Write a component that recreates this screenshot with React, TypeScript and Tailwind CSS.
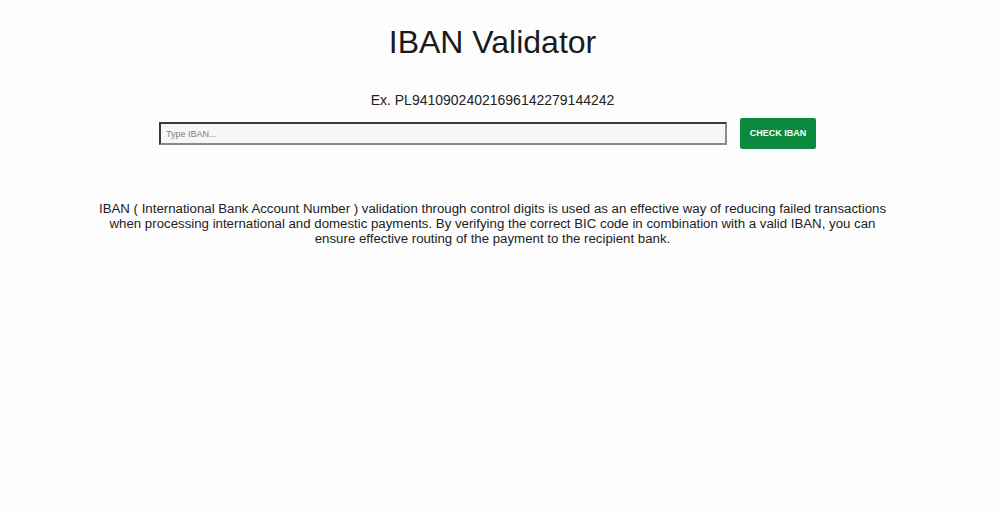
export default function App() {
  return (
    <div className="min-h-screen bg-[#fdfdfd] pr-[15px] text-[#222] font-['Liberation_Sans',Arial,sans-serif]">
      <div className="mx-auto flex w-[820px] flex-col items-center pt-[22px]">
        {/* Title */}
        <h1 className="text-[32px] leading-[40px] text-[#1a1a1a]">IBAN Validator</h1>

        {/* Example */}
        <p className="mt-[30px] text-[14px] leading-[16px] text-[#222]">
          Ex. PL94109024021696142279144242
        </p>

        {/* Form */}
        <div className="mt-[10px] flex items-center gap-[13px] pr-[10px]">
          <input
            type="text"
            placeholder="Type IBAN..."
            className="h-[23px] w-[568px] border-2 border-t-[#3a3a3a] border-l-[#3a3a3a] border-r-[#8a8a8a] border-b-[#8a8a8a] bg-[#f6f6f6] px-[5px] text-[9px] text-[#555] placeholder:text-[#808080] outline-none"
          />
          <button className="h-[31px] w-[76px] rounded-[2px] bg-[#0b8a3e] text-[9px] font-bold text-white">
            CHECK IBAN
          </button>
        </div>

        {/* Description */}
        <p className="mt-[52px] w-[794px] text-center text-[13.25px] leading-[15px] text-[#222]">
          IBAN ( International Bank Account Number ) validation through control digits is used as an
          effective way of reducing failed transactions when processing international and domestic
          payments. By verifying the correct BIC code in combination with a valid IBAN, you can ensure
          effective routing of the payment to the recipient bank.
        </p>
      </div>
    </div>
  );
}
